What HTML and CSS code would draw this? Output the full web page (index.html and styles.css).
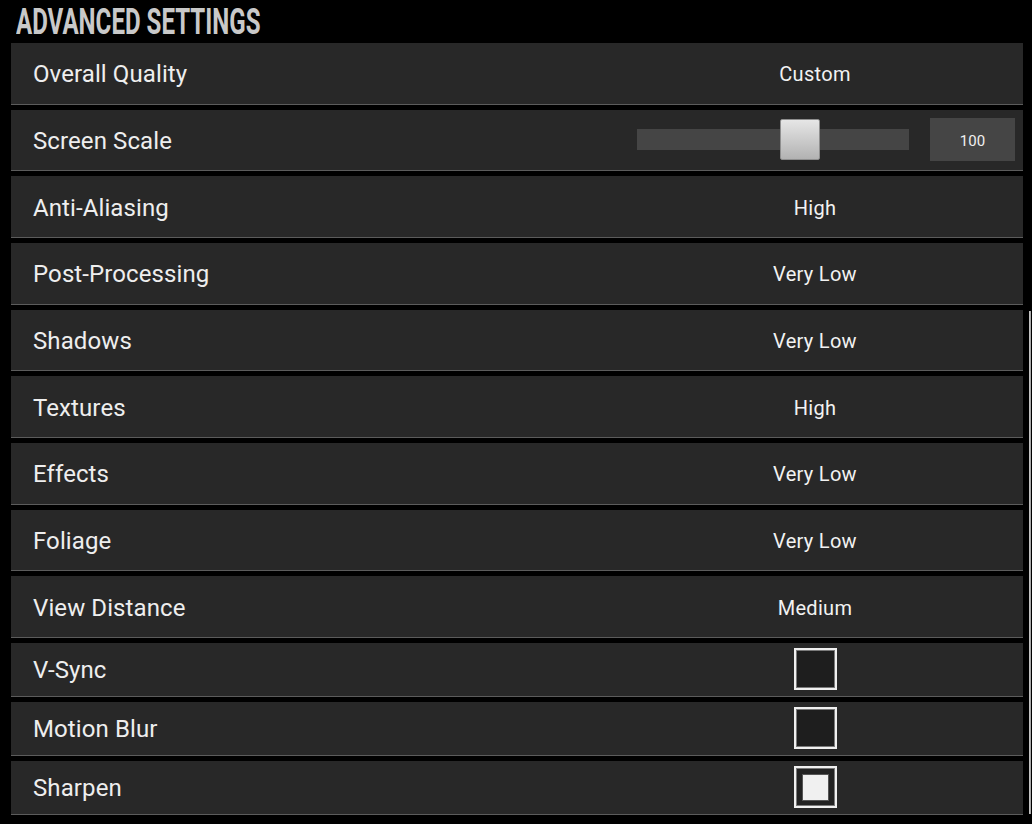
FILE: index.html
```html
<!DOCTYPE html>
<html>
<head>
<meta charset="utf-8">
<link rel="stylesheet" href="styles.css">
</head>
<body>
<div class="panel">
  <h1 class="title"><span class="title-text">ADVANCED SETTINGS</span></h1>
  <div class="list">
    <div class="row"><div class="label">Overall Quality</div><div class="value text">Custom</div></div>
    <div class="row slider-row">
      <div class="label">Screen Scale</div>
      <div class="slider"><div class="track"></div><div class="thumb"></div></div>
      <div class="numbox">100</div>
    </div>
    <div class="row"><div class="label">Anti-Aliasing</div><div class="value text">High</div></div>
    <div class="row"><div class="label">Post-Processing</div><div class="value text">Very Low</div></div>
    <div class="row"><div class="label">Shadows</div><div class="value text">Very Low</div></div>
    <div class="row"><div class="label">Textures</div><div class="value text">High</div></div>
    <div class="row"><div class="label">Effects</div><div class="value text">Very Low</div></div>
    <div class="row"><div class="label">Foliage</div><div class="value text">Very Low</div></div>
    <div class="row"><div class="label">View Distance</div><div class="value text">Medium</div></div>
    <div class="row check-row"><div class="label">V-Sync</div><div class="value"><span class="checkbox"></span></div></div>
    <div class="row check-row"><div class="label">Motion Blur</div><div class="value"><span class="checkbox"></span></div></div>
    <div class="row check-row"><div class="label">Sharpen</div><div class="value"><span class="checkbox checked"><span class="mark"></span></span></div></div>
  </div>
  <div class="scrollbar"></div>
</div>
</body>
</html>
```
FILE: styles.css
```css
html, body {
  margin: 0;
  padding: 0;
  background: #000;
}
body {
  font-family: Roboto, "Liberation Sans", sans-serif;
  color: #efefef;
}
.panel {
  position: relative;
  width: 1032px;
  height: 824px;
  padding: 0 9px 0 11px;
  box-sizing: border-box;
  overflow: hidden;
}
.title {
  margin: 0;
  height: 43px;
  line-height: 43px;
  font-size: 36.5px;
  font-weight: 700;
  color: #c9c9c9;
  white-space: nowrap;
}
.title-text {
  display: inline-block;
  margin-left: 5px;
  transform: scaleX(0.66);
  transform-origin: left center;
}
.list {
  display: flex;
  flex-direction: column;
  gap: 5px;
}
.row {
  display: flex;
  align-items: center;
  height: 60.67px;
  background: #282828;
  border-bottom: 1px solid #5c5c5c;
  padding-right: 118px;
}
.check-row {
  height: 53px;
}
.label {
  flex: 1;
  padding-left: 22px;
  padding-top: 2px;
  font-size: 24px;
  letter-spacing: 0.1px;
  color: #eeeeee;
}
.value {
  width: 180px;
  text-align: center;
  font-size: 20px;
  letter-spacing: 0.3px;
  color: #f2f2f2;
  display: flex;
  justify-content: center;
  align-items: center;
}
.value.text {
  padding-top: 2px;
}
.slider-row {
  padding-right: 8px;
}
.slider {
  position: relative;
  width: 272px;
  height: 41px;
  display: flex;
  align-items: center;
  margin-right: 21px;
}
.track {
  width: 100%;
  height: 21px;
  background: #454545;
}
.thumb {
  position: absolute;
  left: 143px;
  top: 0;
  width: 38px;
  height: 39px;
  border: 1px solid #8e8e8e;
  border-radius: 2px;
  background: linear-gradient(#e6e6e6, #b2b2b2);
}
.numbox {
  width: 85px;
  height: 43px;
  padding-top: 2px;
  box-sizing: border-box;
  background: #454545;
  color: #f0f0f0;
  font-size: 15px;
  display: flex;
  align-items: center;
  justify-content: center;
}
.checkbox {
  display: flex;
  align-items: center;
  justify-content: center;
  width: 39px;
  height: 38px;
  border: 2px solid #f0f0f0;
  box-shadow: inset 0 0 0 1px #7a7a7a;
  background: #1e1e1e;
}
.checkbox.checked {
  background: #222;
}
.mark {
  width: 25px;
  height: 25px;
  background: #f0f0f0;
  border: 1px solid #555;
}
.scrollbar {
  position: absolute;
  left: 1029px;
  top: 311px;
  width: 2px;
  height: 503px;
  background: linear-gradient(90deg, #d0d0d0, #9a9a9a);
}
```
